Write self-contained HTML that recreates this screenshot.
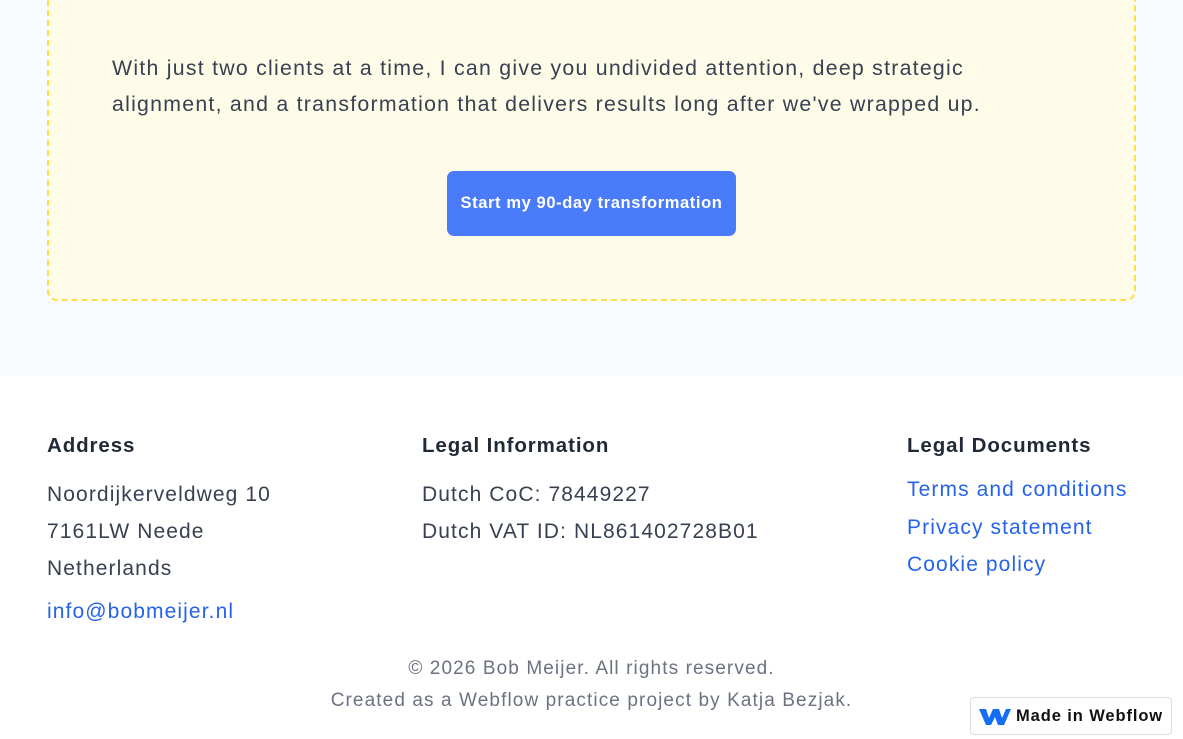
<!DOCTYPE html>
<html><head><style>
*{margin:0;padding:0;box-sizing:border-box}
body{width:1183px;height:739px;overflow:hidden;background:#fff;font-family:"Liberation Sans",sans-serif;position:relative}
.top{position:absolute;left:0;top:0;width:1183px;height:376px;background:#f8fafc}
.box{position:absolute;left:47px;top:-30px;width:1089px;height:331px;background:#fefce8;border:2px dashed #fde047;border-radius:10px}
.p{position:absolute;left:112px;top:50px;font-size:21.3px;line-height:36px;color:#374151;width:900px;letter-spacing:1.25px;white-space:nowrap}
.btn{position:absolute;left:447px;top:171px;width:289px;height:65px;background:#4a7bfa;border-radius:7px;color:#fff;font-weight:bold;font-size:16.5px;text-align:center;line-height:65px;letter-spacing:0.6px}
.h{position:absolute;top:434px;font-size:20.5px;font-weight:bold;color:#1f2937;letter-spacing:0.9px}
.t{position:absolute;font-size:21px;line-height:37px;color:#374151;letter-spacing:1.1px}
.l{color:#2563eb}
.c{position:absolute;left:0;width:1183px;text-align:center;font-size:19px;color:#6b7280;line-height:32px;top:653px;letter-spacing:1.1px}
.wf{position:absolute;left:970px;top:697px;width:202px;height:38px;border:1px solid #ddd;border-radius:4px;background:#fff;font-weight:bold;font-size:16.5px;color:#111;line-height:36px;padding-left:45px;letter-spacing:0.9px}
</style></head><body>
<div class="top"><div class="box"></div>
<div class="p">With just two clients at a time, I can give you undivided attention, deep strategic<br>alignment, and a transformation that delivers results long after we've wrapped up.</div>
<div class="btn">Start my 90-day transformation</div></div>
<div class="h" style="left:47px">Address</div>
<div class="h" style="left:422px">Legal Information</div>
<div class="h" style="left:907px">Legal Documents</div>
<div class="t" style="left:47px;top:476px">Noordijkerveldweg 10<br>7161LW Neede<br>Netherlands</div>
<div class="t l" style="left:47px;top:593px">info@bobmeijer.nl</div>
<div class="t" style="left:422px;top:476px">Dutch CoC: 78449227<br>Dutch VAT ID: NL861402728B01</div>
<div class="t l" style="left:907px;top:471px;line-height:37.5px">Terms and conditions<br>Privacy statement<br>Cookie policy</div>
<div class="c">© 2026 Bob Meijer. All rights reserved.<br>Created as a Webflow practice project by Katja Bezjak.</div>
<div class="wf"><svg style="position:absolute;left:8px;top:9px" width="32" height="20" viewBox="0 0 32 20"><path d="M0 2h7l3 9 4-9h6l3 9 4-9h5l-7 16h-6l-3-8-4 8H7z" fill="#146ef5"/></svg>Made in Webflow</div>
</body></html>
